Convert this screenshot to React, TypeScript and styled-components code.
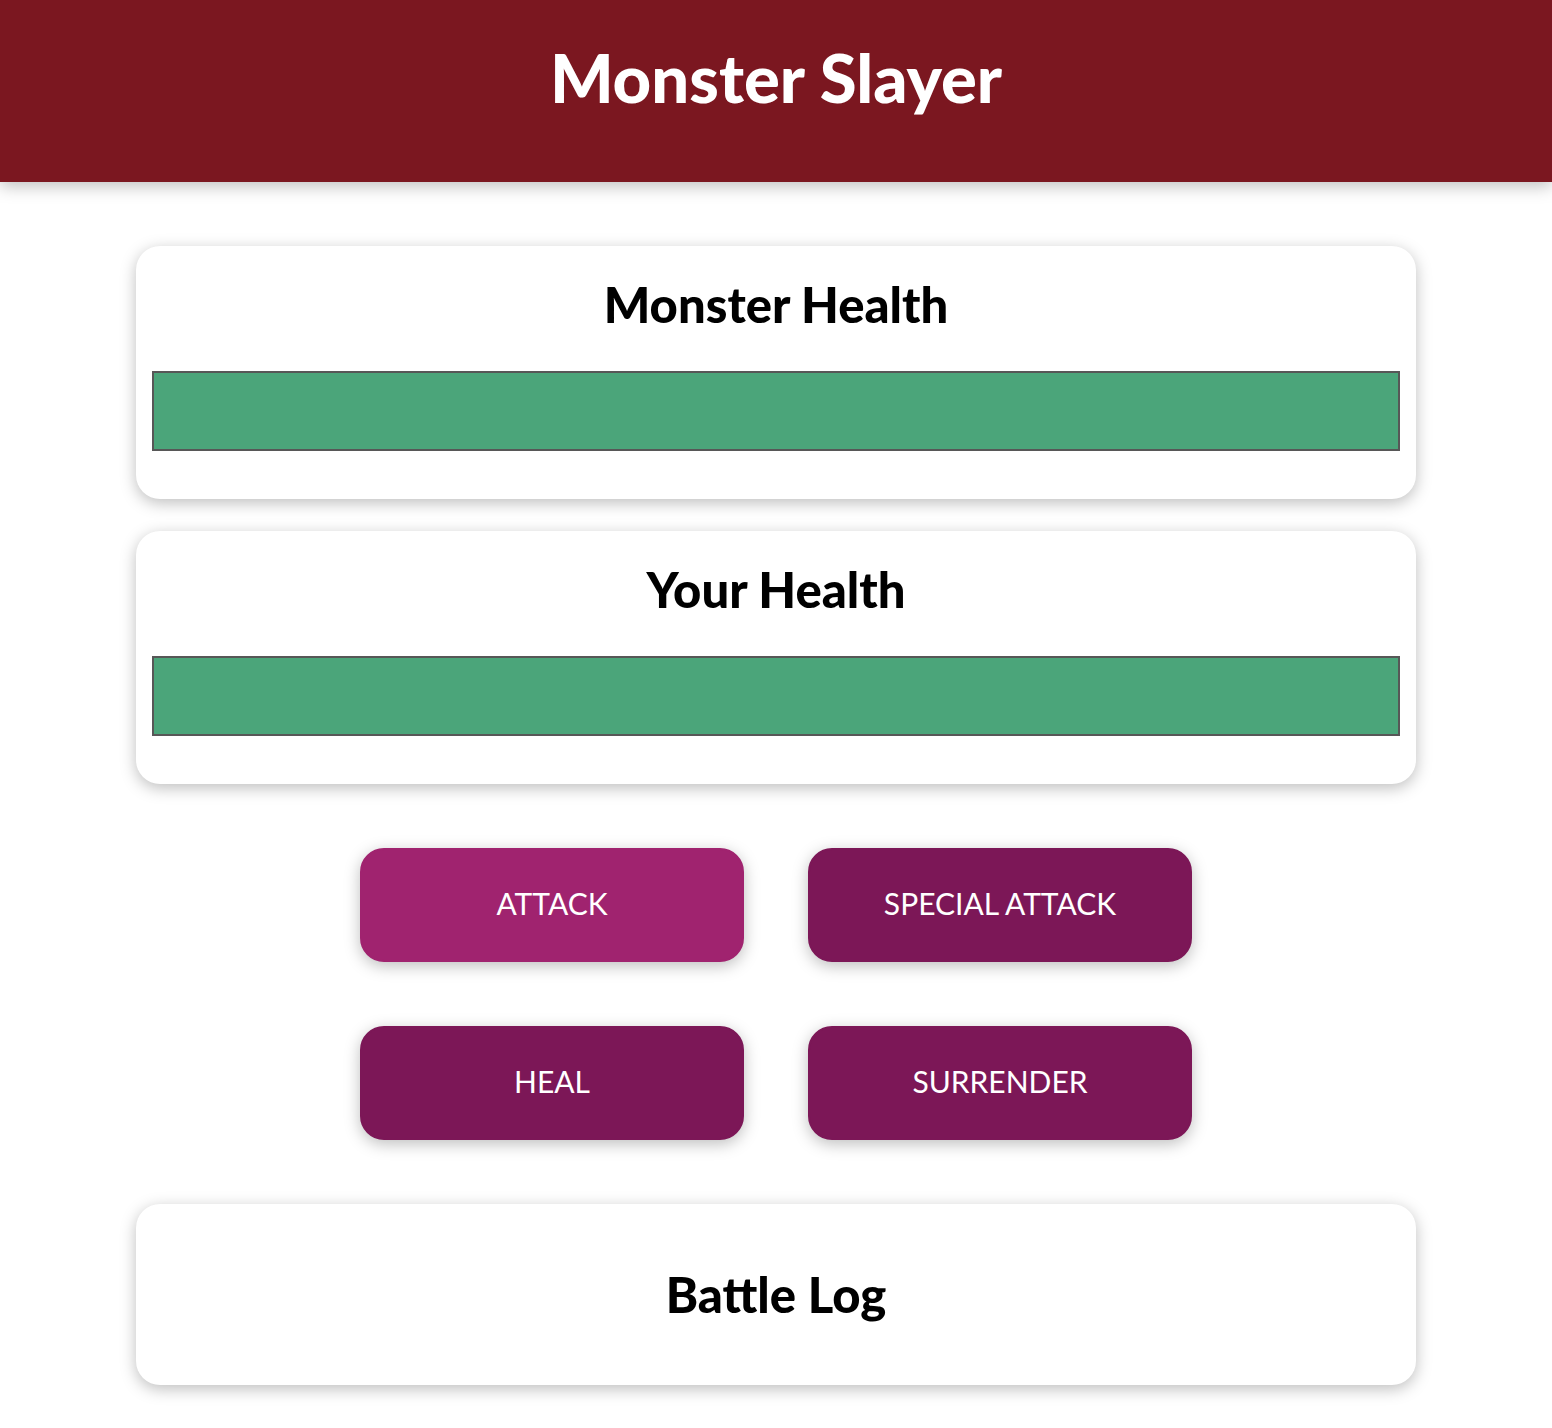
import React from 'react';
import styled, { createGlobalStyle } from 'styled-components';

const GlobalStyle = createGlobalStyle`
  * {
    box-sizing: border-box;
  }
  html {
    font-family: Lato, 'Open Sans', sans-serif;
  }
  body {
    margin: 0;
    background: #fff;
  }
`;

const Header = styled.header`
  height: 182px;
  margin-bottom: 64px;
  background-color: #7b1720;
  color: #fff;
  display: flex;
  align-items: center;
  justify-content: center;
  box-shadow: 0 4px 16px rgba(0, 0, 0, 0.26);
`;

const Title = styled.h1`
  margin: 0;
  font-size: 67px;
  font-weight: 900;
  line-height: 1;
  padding-bottom: 28px;
`;

const Section = styled.section`
  width: 90%;
  max-width: 1280px;
  margin: 0 auto;
`;

const Card = styled.div`
  text-align: center;
  padding: 16px;
  margin: 32px auto;
  border-radius: 24px;
  background: #fff;
  box-shadow: 0 4px 16px rgba(0, 0, 0, 0.26);
`;

const CardTitle = styled.h2<{ $gap: number }>`
  margin: ${(p) => p.$gap}px 0;
  font-size: 49px;
  font-weight: 900;
  line-height: 69px;
  color: #000;
`;

const HealthBar = styled.div`
  width: 100%;
  height: 80px;
  margin: 32px 0;
  border: 2px solid #575757;
  background: #fde5e5;
`;

const HealthValue = styled.div`
  height: 100%;
  background-color: #4ba57a;
`;

const Controls = styled.section`
  width: 90%;
  max-width: 1280px;
  margin: 0 auto;
  display: flex;
  flex-wrap: wrap;
  justify-content: center;
`;

const ActionButton = styled.button<{ $active?: boolean }>`
  font: inherit;
  font-size: 30px;
  width: 384px;
  height: 114px;
  margin: 32px;
  padding: 0 32px 4px;
  border-radius: 24px;
  border: 2px solid ${(p) => (p.$active ? '#a0236f' : '#7c1757')};
  background-color: ${(p) => (p.$active ? '#a0236f' : '#7c1757')};
  color: #fff;
  cursor: pointer;
  box-shadow: 0 4px 16px rgba(0, 0, 0, 0.26);
`;

type BarProps = { title: string; value: number };

const HealthCard: React.FC<BarProps> = ({ title, value }) => (
  <Card>
    <CardTitle $gap={8}>{title}</CardTitle>
    <HealthBar>
      <HealthValue style={{ width: `${value}%` }} />
    </HealthBar>
  </Card>
);

export default function App() {
  const actions = ['ATTACK', 'SPECIAL ATTACK', 'HEAL', 'SURRENDER'];

  return (
    <>
      <GlobalStyle />
      <Header>
        <Title>Monster Slayer</Title>
      </Header>
      <Section>
        <HealthCard title="Monster Health" value={100} />
        <HealthCard title="Your Health" value={100} />
      </Section>
      <Controls>
        {actions.map((label, i) => (
          <ActionButton key={label} $active={i === 0}>
            {label}
          </ActionButton>
        ))}
      </Controls>
      <Section>
        <Card>
          <CardTitle $gap={40}>Battle Log</CardTitle>
        </Card>
      </Section>
    </>
  );
}
